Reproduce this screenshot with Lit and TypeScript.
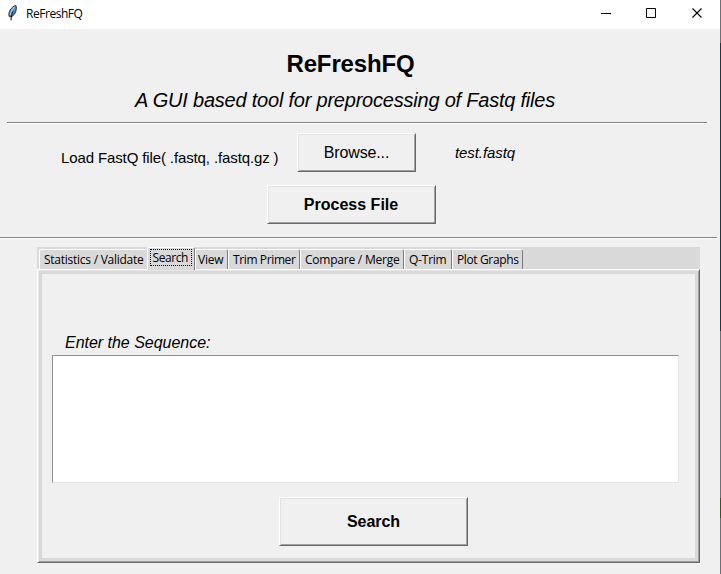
import { LitElement, html, css } from "lit";
import { customElement, property } from "lit/decorators.js";

/** One line of text whose letter spacing is set so that it spans `span` pixels. */
@customElement("fit-label")
class FitLabel extends LitElement {
  @property() text = "";
  @property({ type: Number }) span = 0;

  static styles = css`
    :host { display: block; white-space: pre; }
    span { display: inline-block; }
  `;

  updated() {
    const el = this.renderRoot.querySelector("span") as HTMLElement;
    el.style.letterSpacing = "0px";
    const gap = (this.span - el.getBoundingClientRect().width) / this.text.length;
    el.style.letterSpacing = `${gap}px`;
  }

  render() {
    return html`<span>${this.text}</span>`;
  }
}

interface Tab { name: string; width: number; span: number; active?: boolean; }

const TABS: Tab[] = [
  { name: "Statistics / Validate", width: 108, span: 99.5 },
  { name: "Search", width: 48, span: 35.5, active: true },
  { name: "View", width: 33, span: 25.5 },
  { name: "Trim Primer", width: 72, span: 62.5 },
  { name: "Compare / Merge", width: 104, span: 94.5 },
  { name: "Q-Trim", width: 48, span: 37.5 },
  { name: "Plot Graphs", width: 71, span: 61.5 },
];

@customElement("app-root")
class AppRoot extends LitElement {
  static styles = css`
    :host {
      display: flex; width: 721px; height: 574px; overflow: hidden;
      background: #f0f0f0; color: #000;
      font-family: "Liberation Sans", Arial, sans-serif; font-size: 16px; line-height: 20px;
    }
    * { box-sizing: border-box; }
    .window { width: 720px; height: 574px; display: flex; flex-direction: column; }
    .edge { width: 1px; height: 574px; display: flex; flex-direction: column; background: #6d7072; }
    .edge .sea { margin-top: 43px; height: 288px; background: #173848; }
    .edge .leaf { margin-top: 167px; height: 20px; background: #2f5a25; }
    .titlebar {
      height: 29px; flex: none; background: #fff; display: flex;
      font-family: "Open Sans", "Noto Sans", sans-serif; font-size: 12px; line-height: 16px;
    }
    .feather { width: 12px; height: 18px; margin: 4px 0 0 7px; }
    .titlebar fit-label { margin: 6px 0 0 7px; }
    .controls { margin-left: auto; margin-right: 17px; margin-top: 8px; display: flex; gap: 35px; }
    .controls svg { width: 11px; height: 11px; display: block; }
    .heading { align-self: flex-start; margin: 21px 0 0 286.5px; font-size: 24px; line-height: 28px; font-weight: bold; }
    .sub { align-self: flex-start; margin: 12px 0 0 135px; font-size: 20px; font-style: italic; }
    .rule { height: 2px; flex: none; border-top: 1px solid #848484; border-bottom: 1px solid #fff; }
    .rule.a { margin: 12px 13px 0 7px; }
    .rule.b { margin: 13px 3px 0 0; }
    .load { height: 39px; margin-top: 9px; display: flex; }
    .load .caption { width: 236px; margin: 15px 0 0 61px; font-size: 15px; }
    .load .file { margin: 10px 0 0 39px; font-size: 15px; font-style: italic; }
    .button {
      border: 1px solid; border-color: #fff #696969 #696969 #fff;
      box-shadow: inset 1px 1px #e3e3e3, inset -1px -1px #a0a0a0;
      display: flex; justify-content: center; flex: none;
    }
    .browse { width: 119px; height: 39px; padding-top: 9px; }
    .process { width: 169px; height: 39px; margin: 13px 0 0 267px; padding: 9px 1px 0 0; font-weight: bold; }
    .search { width: 189px; height: 49px; margin: 14px 0 0 237px; padding-top: 14px; font-weight: bold; }
    .notebook { width: 663px; margin: 8px 0 0 37px; }
    .tabs {
      height: 22px; background: #d9d9d9; display: flex; align-items: flex-end; padding-left: 2px;
      font-family: "Open Sans", "Noto Sans", sans-serif; font-size: 12px; line-height: 16px;
    }
    .tab {
      height: 20px; padding: 2px 0 0 4px; border-top: 1px solid #fff; border-left: 1px solid #fff;
      border-right: 1px solid #7c7c7c; border-radius: 2px 3px 0 0; background: #d9d9d9;
    }
    .tab:first-child { border-right-color: #d9d9d9; }
    .tab.active { height: 23px; margin-bottom: -1px; padding: 1px 0 0 2px; position: relative; z-index: 1; }
    .tab.active + .tab { padding-left: 2px; }
    .focus { width: 42px; height: 17px; padding-left: 1.5px; border: 1px dotted #000; line-height: 16px; }
    .panel {
      height: 294px; border: 1px solid; border-color: #fff #696969 #696969 #fff;
      box-shadow: inset 1px 1px #e6e6e6, inset -1px -1px #a0a0a0, inset 0 0 0 4px #d9d9d9;
      padding: 63px 0 0 14px; display: flex; flex-direction: column; align-items: flex-start;
    }
    .prompt { margin-left: 13px; font-style: italic; }
    .entry {
      width: 627px; height: 128px; margin-top: 2px; background: #fff;
      border: 1px solid; border-color: #909090 #e3e3e3 #e3e3e3 #909090;
    }
    .panel .search { margin-left: 227px; }
  `;

  render() {
    return html`
      <div class="window">
        <div class="titlebar">
          <svg class="feather" viewBox="0 0 12 18">
            <path d="M2.2 12.5C.8 8.5 3.8 3 8.9 1.4c1.3 3.3-.2 9-4.5 11.5z" fill="#4a8ac4" stroke="#2b333a" stroke-width="1"/>
            <path d="M7.6 3C5 5.4 3.6 8 3.1 11" fill="none" stroke="#a4cdec" stroke-width="1.3"/>
            <path d="M5.8 7.5C4.6 10 4.2 12.5 4 16.4" fill="none" stroke="#111" stroke-width="1"/>
          </svg>
          <fit-label text="ReFreshFQ" span="56.5"></fit-label>
          <div class="controls">
            <svg viewBox="0 0 11 11"><path d="M1 5.5h10" stroke="#000"/></svg>
            <svg viewBox="0 0 11 11"><path d="M.5.5h9v9h-9z" fill="none" stroke="#000"/></svg>
            <svg viewBox="0 0 11 11"><path d="M.5.5l9 9M9.5.5l-9 9" stroke="#000" stroke-width="1.1"/></svg>
          </div>
        </div>
        <fit-label class="heading" text="ReFreshFQ" span="128"></fit-label>
        <fit-label class="sub" text="A GUI based tool for preprocessing of Fastq files" span="420"></fit-label>
        <div class="rule a"></div>
        <div class="load">
          <fit-label class="caption" text="Load FastQ file( .fastq, .fastq.gz )" span="217.5"></fit-label>
          <div class="button browse"><fit-label text="Browse..." span="65.5"></fit-label></div>
          <fit-label class="file" text="test.fastq" span="60"></fit-label>
        </div>
        <div class="button process"><fit-label text="Process File" span="94.5"></fit-label></div>
        <div class="rule b"></div>
        <div class="notebook">
          <div class="tabs">
            ${TABS.map((t) => {
              const label = html`<fit-label text=${t.name} span=${t.span}></fit-label>`;
              return html`<div class="tab ${t.active ? "active" : ""}" style="width:${t.width}px">
                ${t.active ? html`<div class="focus">${label}</div>` : label}
              </div>`;
            })}
          </div>
          <div class="panel">
            <fit-label class="prompt" text="Enter the Sequence:" span="145.5"></fit-label>
            <div class="entry"></div>
            <div class="button search"><fit-label text="Search" span="53"></fit-label></div>
          </div>
        </div>
      </div>
      <div class="edge"><div class="sea"></div><div class="leaf"></div></div>
    `;
  }
}
